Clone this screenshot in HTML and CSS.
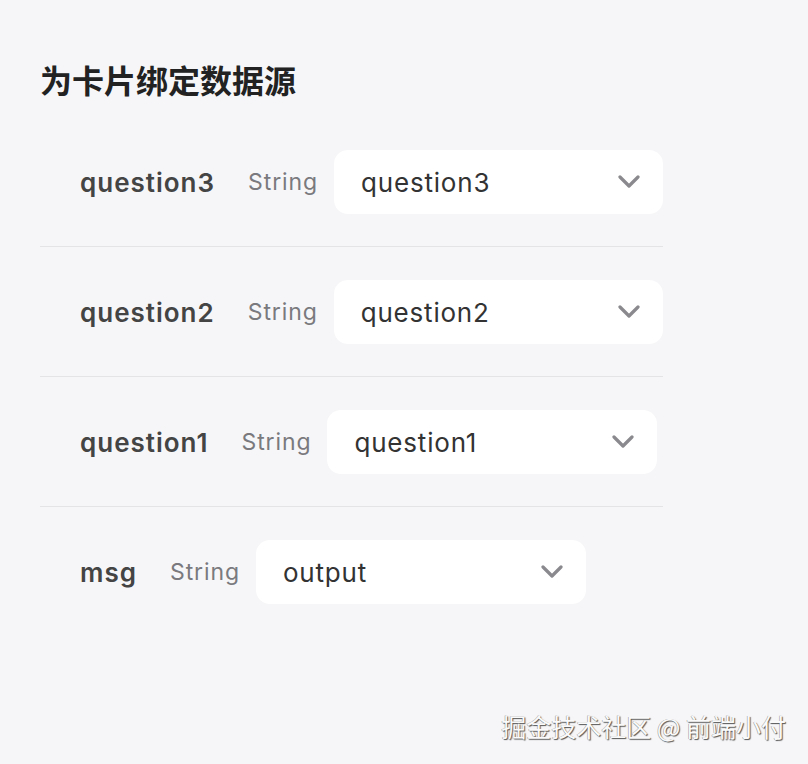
FILE: index.html
```html
<!DOCTYPE html>
<html lang="zh">
<head>
<meta charset="utf-8">
<link rel="stylesheet" href="styles.css">
</head>
<body>
<div class="page">
  <h1 class="title">为卡片绑定数据源</h1>
  <div class="list">
    <div class="row">
      <span class="name">question3</span>
      <span class="type">String</span>
      <div class="select"><span class="value">question3</span><svg class="chev" width="22" height="14" viewBox="0 0 22 14"><path d="M2 2 L11 11 L20 2" fill="none" stroke="#8a8a8e" stroke-width="3.2" stroke-linecap="round" stroke-linejoin="round"/></svg></div>
    </div>
    <div class="row">
      <span class="name">question2</span>
      <span class="type">String</span>
      <div class="select"><span class="value">question2</span><svg class="chev" width="22" height="14" viewBox="0 0 22 14"><path d="M2 2 L11 11 L20 2" fill="none" stroke="#8a8a8e" stroke-width="3.2" stroke-linecap="round" stroke-linejoin="round"/></svg></div>
    </div>
    <div class="row">
      <span class="name">question1</span>
      <span class="type">String</span>
      <div class="select"><span class="value">question1</span><svg class="chev" width="22" height="14" viewBox="0 0 22 14"><path d="M2 2 L11 11 L20 2" fill="none" stroke="#8a8a8e" stroke-width="3.2" stroke-linecap="round" stroke-linejoin="round"/></svg></div>
    </div>
    <div class="row last">
      <span class="name">msg</span>
      <span class="type">String</span>
      <div class="select"><span class="value">output</span><svg class="chev" width="22" height="14" viewBox="0 0 22 14"><path d="M2 2 L11 11 L20 2" fill="none" stroke="#8a8a8e" stroke-width="3.2" stroke-linecap="round" stroke-linejoin="round"/></svg></div>
    </div>
  </div>
  <div class="watermark">掘金技术社区 @ 前端小付</div>
</div>
</body>
</html>
```
FILE: styles.css
```css
html, body {
  margin: 0;
  padding: 0;
  background: #f6f6f8;
}
body {
  font-family: Inter, "Noto Sans CJK SC", sans-serif;
  width: 808px;
  height: 764px;
  overflow: hidden;
}
.page {
  position: relative;
  height: 764px;
  padding: 0 0 0 40px;
  box-sizing: border-box;
}
.title {
  margin: 0;
  padding-top: 59px;
  font-family: "Noto Sans CJK SC", sans-serif;
  font-size: 32px;
  line-height: 40px;
  font-weight: 700;
  color: #222;
}
.list {
  width: 623px;
  margin-top: 18px;
}
.row {
  display: flex;
  align-items: center;
  padding: 33px 0 32px 40px;
  border-bottom: 1px solid #e4e4e7;
}
.row.last {
  border-bottom: none;
}
.name {
  font-size: 26px;
  font-weight: 600;
  letter-spacing: 1px;
  color: #444;
  margin-right: 33px;
}
.type {
  font-size: 23px;
  letter-spacing: 0.9px;
  color: #7a7a7e;
  margin-right: 16px;
}
.select {
  width: 330px;
  height: 64px;
  box-sizing: border-box;
  background: #fff;
  border-radius: 14px;
  display: flex;
  align-items: center;
  justify-content: space-between;
  padding: 0 23px 0 27px;
}
.value {
  font-size: 26px;
  letter-spacing: 0.8px;
  color: #333;
}
.chev {
  display: block;
}
.watermark {
  position: absolute;
  right: 22px;
  bottom: 20px;
  font-family: "Noto Sans CJK SC", sans-serif;
  font-size: 25px;
  color: #fafafa;
  text-shadow: 1px 1px 1px #555, -0.5px -0.5px 0 #999;
}
```
